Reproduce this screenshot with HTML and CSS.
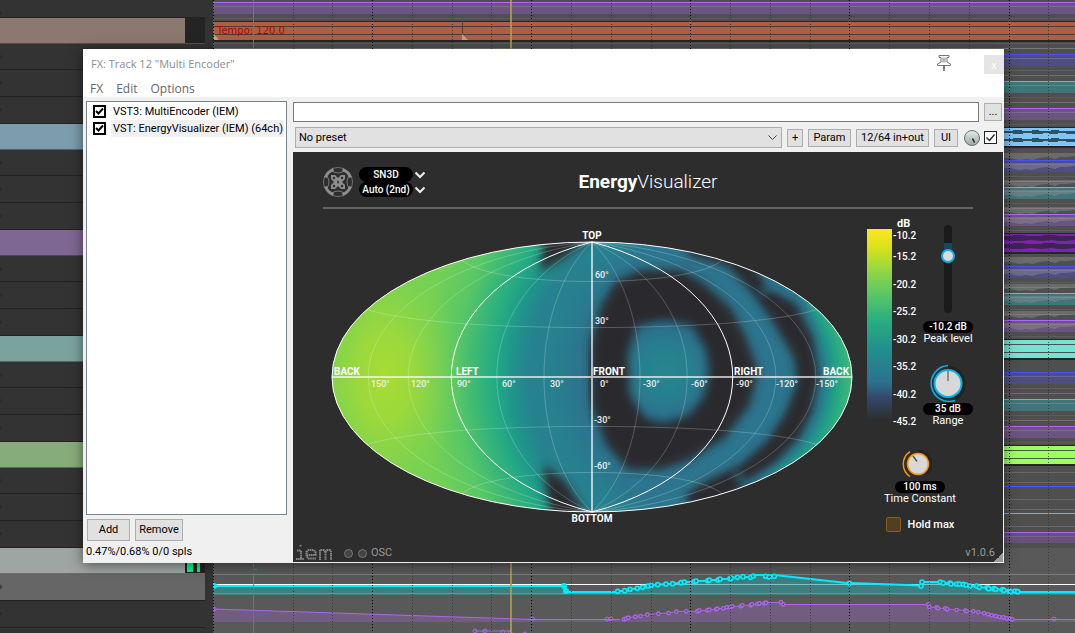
FILE: index.html
```html
<!DOCTYPE html>
<html lang="en">
<head>
<meta charset="utf-8">
<title>FX: Track 12 "Multi Encoder"</title>
<link rel="stylesheet" href="styles.css">
</head>
<body>
<div class="daw">
  <div class="tracks">
    <div class="track first"></div>
    <div class="track folder brown"><span class="meter"></span></div>
    <div class="track short"></div><div class="track"></div><div class="track"></div>
    <div class="track folder blue"></div>
    <div class="track short"></div><div class="track"></div><div class="track"></div>
    <div class="track folder purple"></div>
    <div class="track short"></div><div class="track"></div><div class="track"></div>
    <div class="track folder teal"></div>
    <div class="track short"></div><div class="track"></div><div class="track"></div>
    <div class="track folder green"></div>
    <div class="track short"></div><div class="track"></div><div class="track"></div>
    <div class="track folder silver"><span class="meter"><i></i><i class="thin"></i></span></div>
    <div class="track selected"></div><div class="track"></div><div class="track"></div>
  </div>
  <svg class="arrange" viewBox="213 0 862 633" preserveAspectRatio="xMinYMin slice" aria-hidden="true">
    <defs>
      <g id="lane" shape-rendering="crispEdges">
        <rect x="213" width="862" height="11" y="1" opacity=".28" fill="currentColor"/>
        <rect x="213" width="862" height="1" fill="currentColor"/>
        <rect x="213" width="862" height="1" y="4" fill="#fff" opacity=".14"/>
        <rect x="213" width="862" height="1" y="16" fill="#5d5d5d"/>
        <rect x="213" width="862" height="1" y="21" fill="#707070"/>
      </g>
      <g id="lanes">
        <use href="#lane" y="0" color="#4a50ff"/>
        <use href="#lane" y="27" color="#18dcec"/>
        <use href="#lane" y="54" color="#b066ff"/>
      </g>
      <g id="item" shape-rendering="crispEdges">
        <rect x="213" y="-1" width="862" height="21" fill="#262626"/>
        <rect x="213" width="862" height="18" fill="currentColor"/>
        <rect x="213" y="4" width="862" height="1" fill="#333" opacity=".8"/>
        <rect x="213" y="12" width="862" height="1" fill="#333" opacity=".8"/>
      </g>
      <path id="wave" d="M1004 0h9v-1h9v1h10v-1h7v1h12v-1h8v1h16v3h-9v-1h-8v1h-9v-1h-6v1h-11v-1h-9v1h-10v-1h-9z"/>
      <path id="thickwave" d="M1004 0h8l2-1h9l4 1h14l3-1h10l5 1h16v4l-9 1h-7l-8-1-9 1-12-1-8 1h-9l-9-1z"/>
      <path id="haze" d="M1004 0h71v3l-8 1h-7l-5 2-8-2-8 1-7 2-6-1-7 1-9-2-6 0z" fill="#8e8e8e" opacity=".45"/>
      <marker id="cyan-dot" markerUnits="userSpaceOnUse" markerWidth="20" markerHeight="20" refX="10" refY="10"><circle cx="10" cy="10" r="6" fill="#3c6668" stroke="#00eeff" stroke-width="5"/></marker>
      <marker id="violet-dot" markerUnits="userSpaceOnUse" markerWidth="16" markerHeight="16" refX="8" refY="8"><circle cx="8" cy="8" r="5" fill="#59506a" stroke="#ae66ec" stroke-width="4"/></marker>
    </defs>
    <rect x="213" width="862" height="633" fill="#4f4f4f"/>
    <rect x="213" y="548" width="862" height="85" fill="#595959"/>
    <use href="#lane" y="2" color="#b066ff"/>
    <use href="#item" y="22" color="#ac5f43"/>
    <rect x="213" y="43" width="862" height="1" fill="#5b5b5b"/><rect x="213" y="48" width="862" height="1" fill="#777"/>
    <use href="#lanes" y="54"/><use href="#lanes" y="160"/><use href="#lanes" y="266"/><use href="#lanes" y="372"/>
    <g shape-rendering="crispEdges">
      <g fill="#686868"><rect x="1004" y="472" width="71" height="1"/><rect x="1004" y="482" width="71" height="1"/><rect x="1004" y="499" width="71" height="1"/><rect x="1004" y="509" width="71" height="1"/><rect x="1004" y="526" width="71" height="1"/></g>
      <rect x="1004" y="486" width="71" height="1" fill="#4a5cff"/><rect x="1004" y="513" width="71" height="1" fill="#18dcec"/>
      <rect x="1004" y="532" width="71" height="1" fill="#b066ff"/><rect x="1004" y="533" width="71" height="10" fill="#66527a"/>
      <rect x="1004" y="536" width="71" height="1" fill="#776788"/>
    </g>
    <use href="#item" y="128" color="#7cc8fc"/><use href="#item" y="234" color="#7e22b4"/>
    <use href="#item" y="340" color="#78e2d0"/><use href="#item" y="446" color="#9cff66"/>
    <g fill="#33505f"><use href="#wave" y="131"/><use href="#wave" y="139"/></g>
    <g fill="#3f2353"><use href="#thickwave" y="236"/><use href="#thickwave" y="244"/></g>
    <use href="#haze" y="153"/><use href="#haze" y="180"/><use href="#haze" y="207"/>
    <use href="#haze" y="163"/><use href="#haze" y="190"/><use href="#haze" y="217"/>
    <use href="#haze" y="257"/><use href="#haze" y="284"/><use href="#haze" y="311"/>
    <use href="#haze" y="269"/><use href="#haze" y="296"/><use href="#haze" y="323"/>

    <g shape-rendering="crispEdges">
      <rect x="213" y="574" width="862" height="1" fill="#728280"/>
      <rect x="213" y="584" width="862" height="1" fill="#fff"/>
    </g>
    <path d="M213 586H564L566 592H616L650 586L700 580L765 575L850 583L921 585L922 582H945L1018 592H1075V595H213Z" fill="#2f9a9c" opacity=".6"/>
    <rect x="213" y="593" width="862" height="1" fill="#5c9a9b"/>
    <path d="M213 609L533 619.500H620L690 612L770 602.500H781L784 604H928L930 608L1012 619.500H1075V622H213Z" fill="#8862a8" opacity=".5"/>
    <g fill="none" stroke="#00eeff" stroke-width="2">
      <path d="M213 586H564L566 592H618"/>
      <path d="M1017 592H1075"/>
      <path d="M850 583L921 585.500"/>
    </g>
    <path d="M213 609L533 619.500H620M784 604.500H928M1012 619.500H1075" fill="none" stroke="#ae66ec"/>
    <g fill="none" stroke="#00eeff" stroke-width="2">
      <circle cx="214" cy="586" r="2"/><circle cx="564" cy="586" r="2"/><circle cx="566" cy="591" r="2"/>
    </g>
    <g fill="none" stroke="#ae66ec"><circle cx="214" cy="609" r="2"/><circle cx="532.500" cy="619" r="2"/><circle cx="607" cy="619" r="2"/><circle cx="611" cy="619" r="2"/><circle cx="1054" cy="619" r="2"/><path d="M475 631H512"/><circle cx="475" cy="631" r="2"/><circle cx="485" cy="631" r="2"/><circle cx="503" cy="632" r="2"/><circle cx="510" cy="633" r="2"/><circle cx="525" cy="634" r="2"/></g>
    <g transform="translate(580 550) scale(.33333)" fill="none">
      <polyline stroke="#00eeff" stroke-width="6" marker-start="url(#cyan-dot)" marker-mid="url(#cyan-dot)" marker-end="url(#cyan-dot)" points="113,124 134,122 150,118 172,115 188,112 204,108 214,106 233,104 258,102 278,101 303,98 313,96 343,95 348,93 384,92 388,90 414,90 420,87 450,86 454,84 472,82 489,80 512,82 520,78"/>
      <polyline stroke="#00eeff" stroke-width="6" points="520,77 530,75 590,76 808,100"/>
      <polyline stroke="none" marker-start="url(#cyan-dot)" marker-mid="url(#cyan-dot)" marker-end="url(#cyan-dot)" points="557,79 568,81 583,79 808,100"/>
      <polyline stroke="#ae66ec" stroke-width="3" marker-start="url(#violet-dot)" marker-mid="url(#violet-dot)" marker-end="url(#violet-dot)" points="132,208 138,206 145,203 166,200 181,198 202,194 235,191 266,189 289,185 319,184 352,184 358,181 382,181 388,179 408,178 412,176 430,175 440,172 450,172 457,169 482,169 487,166 512,166 516,163 532,162 538,160 553,160 558,158 603,157 610,163"/>
    </g>
    <g transform="translate(850 400) scale(.33333)" fill="none">
      <polyline stroke="#00eeff" stroke-width="6" marker-start="url(#cyan-dot)" marker-mid="url(#cyan-dot)" marker-end="url(#cyan-dot)" points="213,558 216,546 271,546 280,549 300,549 303,552 320,552 328,552 340,553 348,555 360,558 380,558 388,562 412,563 416,566 432,566 437,568 458,569 462,571 478,573 482,575 496,573 503,575"/>
      <polyline stroke="#ae66ec" stroke-width="3" marker-start="url(#violet-dot)" marker-mid="url(#violet-dot)" marker-end="url(#violet-dot)" points="235,613 238,622 260,622 264,625 286,625 292,628 320,630 346,632 350,634 370,634 385,637 402,640 414,643 425,646 437,648 448,651 460,652 470,655 480,656 487,658"/>
    </g>
    <g stroke="#2b2b2b" stroke-dasharray="1 2" opacity=".75" shape-rendering="crispEdges">
      <path d="M293.500 0V633M332.500 0V633M412.500 0V633M452.500 0V633M491.500 0V633M571.500 0V633M611.500 0V633M651.500 0V633M730.500 0V633M770.500 0V633M810.500 0V633M889.500 0V633M929.500 0V633M969.500 0V633M1048.500 0V633"/>
    </g>
    <path stroke="#000" stroke-dasharray="1 2" shape-rendering="crispEdges" d="M213.500 0V633M372.500 0V633M531.500 0V633M690.500 0V633M849.500 0V633M1009.500 0V633"/>
    <path d="M462.500 21V40" stroke="#5a3a2e"/><path d="M462 34l6 6h-6zM214 34l5 6h-5z" fill="#cf9a8a"/>
    <text class="tempo" x="217" y="34">Tempo: 120.0</text>
    <path d="M253.500 0V567M253.500 573V633M253 569h4" stroke="#3f8f80" shape-rendering="crispEdges"/>
    <rect x="510" width="2" height="633" fill="#b39a50" opacity=".85"/>
  </svg>

  <section class="window">
    <header class="titlebar">
      <h1>FX: Track 12 "Multi Encoder"</h1>
      <button class="pin" aria-label="Pin window"><svg width="16" height="16" viewBox="0 0 16 16" fill="#fff" stroke="#777"><path d="M3 .5h10v2h-2v4.500l3.500 2v1.500H1.500V9L5 7V2.500H3z"/><path d="M7 2.500v5M9 2.500v5M7.500 10.500v4l.5 1.500.5-1.500v-4" fill="none"/></svg></button>
      <button class="close" aria-label="Close">x</button>
    </header>
    <nav class="menu"><button>FX</button><button>Edit</button><button>Options</button></nav>
    <div class="body">
      <div class="chain">
        <ul class="list">
          <li><label><input type="checkbox" checked><span>VST3: MultiEncoder (IEM)</span></label></li>
          <li class="current"><label><input type="checkbox" checked><span>VST: EnergyVisualizer (IEM) (64ch)</span></label></li>
        </ul>
        <div class="buttons"><button class="btn">Add</button><button class="btn">Remove</button></div>
        <p class="status">0.47%/0.68% 0/0 spls</p>
      </div>
      <div class="fx">
        <div class="comment"><input type="text" aria-label="Comment"><button class="btn">...</button></div>
        <div class="preset">
          <span class="drop"><select aria-label="Preset"><option>No preset</option></select></span>
          <button class="btn plus">+</button><button class="btn param">Param</button><button class="btn io">12/64 in+out</button><button class="btn ui">UI</button>
          <svg class="wet" width="18" height="18" viewBox="0 0 18 18"><defs><linearGradient id="wetg" x2="0" y2="1"><stop stop-color="#e8eeec"/><stop offset="1" stop-color="#9aa5a3"/></linearGradient></defs><circle cx="9" cy="9" r="7.500" fill="url(#wetg)" stroke="#6b7372"/><path d="M9.500 9.500l2 4" stroke="#222" stroke-width="1.500"/></svg>
          <input class="bypass" type="checkbox" checked aria-label="Enable FX">
        </div>
        <div class="plugin">
          <header class="phead">
            <svg class="logo" width="30" height="30" viewBox="0 0 30 30" fill="none" stroke="#8d8d8d">
              <path fill="#8d8d8d" stroke="none" d="M10 1Q3.500 3.500 1 10L4 11Q5 6 11 4zM20 1q6.500 2.500 9 9l-3 1Q25 6 19 4zM10 29q-6.500-2.500-9-9l3-1q1 5 7 7zM20 29q6.500-2.500 9-9l-3-1q-1 5-7 7z"/>
              <path d="M9 1.500Q15-.5 21 1.500M28.500 9q2 6 0 12M21 28.500q-6 2-12 0M1.500 21q-2-6 0-12" stroke-width=".7"/>
              <path d="M9 4q6 4 12 0M26 9q-4 6 0 12M21 26q-6-4-12 0M4 21q4-6 0-12" stroke-width=".8"/>
              <path fill="#8d8d8d" stroke="none" d="M8 8h4l3 3 3-3h4v4l-3 3 3 3v4h-4l-3-3-3 3H8v-4l3-3-3-3z"/>
              <g fill="#2d2d2d" stroke="none"><circle cx="11" cy="11" r="1.200"/><circle cx="19" cy="11" r="1.200"/><circle cx="11" cy="19" r="1.200"/><circle cx="19" cy="19" r="1.200"/><path d="M15 13l1 2-1 2-1-2z"/></g>
            </svg>
            <div class="combos">
              <span class="pick"><select aria-label="Normalization"><option>SN3D</option></select><svg width="12" height="8" viewBox="0 0 12 8"><path d="M1.500 1.500L6 6l4.500-4.500" fill="none" stroke="#eee" stroke-width="2"/></svg></span>
              <span class="pick"><select aria-label="Order"><option>Auto (2nd)</option></select><svg width="12" height="8" viewBox="0 0 12 8"><path d="M1.500 1.500L6 6l4.500-4.500" fill="none" stroke="#eee" stroke-width="2"/></svg></span>
            </div>
            <h2><b>Energy</b>Visualizer</h2>
          </header>
          <div class="pmain">
            <svg class="map" viewBox="323 209 544 332" role="img" aria-label="Energy distribution on the sphere">
              <defs>
                <clipPath id="globe"><ellipse cx="592" cy="377" rx="260" ry="135"/></clipPath>
                <radialGradient id="base" gradientUnits="userSpaceOnUse" cx="721" cy="377" r="400">
                  <stop offset=".36" stop-color="#2c758e"/><stop offset=".42" stop-color="#27808e"/><stop offset=".48" stop-color="#26828e"/><stop offset=".525" stop-color="#1f958b"/><stop offset=".56" stop-color="#22a884"/><stop offset=".6" stop-color="#35b479"/><stop offset=".665" stop-color="#58c765"/><stop offset=".75" stop-color="#74d054"/><stop offset="1" stop-color="#7ad151"/>
                </radialGradient>
                <radialGradient id="hot" gradientUnits="userSpaceOnUse" cx="0" cy="0" r="1" gradientTransform="translate(385 377) scale(78 125)">
                  <stop stop-color="#a8db33"/><stop offset=".35" stop-color="#a2da38" stop-opacity=".85"/><stop offset="1" stop-color="#86d549" stop-opacity="0"/>
                </radialGradient>
                <radialGradient id="core" gradientUnits="userSpaceOnUse" cx="665" cy="372" r="52"><stop stop-color="#24888e"/><stop offset=".5" stop-color="#287f8e"/><stop offset="1" stop-color="#2c6c8c"/></radialGradient>
                <radialGradient id="edge" gradientUnits="userSpaceOnUse" cx="720" cy="377" r="134">
                  <stop offset=".7" stop-color="#2c6f8e"/><stop offset=".79" stop-color="#26828e"/><stop offset=".87" stop-color="#20a386"/><stop offset="1" stop-color="#42be71"/>
                </radialGradient>
                <filter id="soft" x="-20%" y="-20%" width="140%" height="140%"><feGaussianBlur stdDeviation="5"/></filter>
                <filter id="softer" x="-30%" y="-30%" width="160%" height="160%"><feGaussianBlur stdDeviation="4"/></filter>
                <filter id="faint" x="-60%" y="-60%" width="220%" height="220%"><feGaussianBlur stdDeviation="5"/></filter>
              </defs>
              <g clip-path="url(#globe)">
                <rect x="323" y="209" width="544" height="332" fill="url(#base)"/>
                <rect x="323" y="209" width="200" height="332" fill="url(#hot)"/>
                <path filter="url(#softer)" fill="url(#edge)" d="M774 270L808 300 818 340 820 377 817 410 800 440 765 475 880 475 880 270z"/>
                <g fill="#2b2a2d">
                  <path filter="url(#soft)" d="M616 281L640 270 682 270 704 283 731 308 745 335 758 370 750 405 725 438 690 460 660 470 628 470 606 445 591 405 590 345 601 305z"/>
                  <path filter="url(#softer)" d="M680 240L690 256 728 266 752 293 773 322 794 358 797 382 786 412 768 440 740 465 708 480 686 494 690 520 730 500 748 480 775 463 800 437 812 412 819 377 813 338 796 304 770 290 760 276 745 250z"/>
                  <path filter="url(#faint)" d="M545 230L592 236 564 258 540 272z"/>
                  <path filter="url(#faint)" d="M543 464L566 482 592 524 552 524 547 494z"/>
                  <path filter="url(#softer)" d="M592 330q-6 47 0 94z"/>
                </g>
                <path filter="url(#soft)" fill="url(#core)" d="M637 326L665 320 692 326 706 350 709 372 704 396 688 416 662 423 645 418 630 395 628 355z"/>
                <path filter="url(#softer)" stroke="#2c6f8e" stroke-width="6" fill="none" d="M760 294l18-14M734 472l14 14" opacity=".8"/>
              </g>
              <g id="graticule" fill="none" stroke="#fff"></g>
              <path d="M332 377H852M592 242V512" stroke="#fff" stroke-width="2" opacity=".65"/>
              <ellipse cx="592" cy="377" rx="260" ry="135" fill="none" stroke="#fff"/>
              <g class="poles"><text x="592" y="239" text-anchor="middle">TOP</text><text x="592" y="522" text-anchor="middle">BOTTOM</text><text x="334" y="375">BACK</text><text x="456" y="375">LEFT</text><text x="593" y="375">FRONT</text><text x="734" y="375">RIGHT</text><text x="849" y="375" text-anchor="end">BACK</text></g>
              <g class="degrees"><text x="371" y="387">150°</text><text x="411" y="387">120°</text><text x="457" y="387">90°</text><text x="502" y="387">60°</text><text x="550" y="387">30°</text><text x="600" y="387">0°</text><text x="643" y="387">-30°</text><text x="691" y="387">-60°</text><text x="736" y="387">-90°</text><text x="776" y="387">-120°</text><text x="816" y="387">-150°</text><text x="595" y="278">60°</text><text x="595" y="324">30°</text><text x="594" y="423">-30°</text><text x="594" y="469">-60°</text></g>
            </svg>
            <aside class="controls">
              <div class="upper">
                <div class="scale"><span class="bar"></span>
                  <div class="ticks"><strong>dB</strong><span>-10.2</span><div class="steps"><span>-15.2</span><span>-20.2</span><span>-25.2</span><span>-30.2</span><span>-35.2</span><span>-40.2</span><span>-45.2</span></div></div>
                </div>
                <div class="column">
                  <input class="fader" id="peak" type="range" min="0" max="100" value="67">
                  <input class="value" type="text" value="-10.2 dB" aria-label="Peak level value">
                  <label for="peak">Peak level</label>
                  <svg class="knob large" viewBox="0 0 40 38"><path d="M20 3a17 17 0 0 1 7 32" stroke="#222" stroke-width="3" fill="none"/><path d="M20 1.500a18 18 0 1 0 7 35" stroke="#08b2ea" stroke-width="1.500" fill="none"/><circle cx="20" cy="19.500" r="13.500" fill="#d8d8d8" stroke="#08b2ea" stroke-width="2"/><path d="M20 7v10" stroke="#777" stroke-width="1.500"/></svg>
                  <input class="value" id="range" type="text" value="35 dB">
                  <label for="range">Range</label>
                </div>
              </div>
              <svg class="knob" viewBox="0 0 32 32"><path d="M16 3a13 13 0 0 1 8 23" stroke="#222" stroke-width="3" fill="none"/><path d="M8 3.500a15 15 0 0 0 0 25" stroke="#fa9800" stroke-width="1.500" fill="none"/><circle cx="16" cy="16" r="10.500" fill="#d8d8d8" stroke="#fa9800" stroke-width="1.500"/><path d="M11 8l4 5.500" stroke="#555" stroke-width="1.500"/></svg>
              <input class="value" id="time" type="text" value="100 ms">
              <label for="time">Time Constant</label>
              <label class="hold"><input type="checkbox">Hold max</label>
            </aside>
          </div>
          <footer class="pfoot">
            <svg width="38" height="16" viewBox="0 0 38 16" fill="none" stroke="#888" stroke-width="2" stroke-dasharray="1.500 .6"><path d="M5.500 0v2M2 5.500h4v8.500M1 14h8M21 13.500h-7.500l-2-2V7l2-2h5l2 2v3h-8M25 15V5h4l1.500 2 1.500-2h3l1 2v8M30.500 7v8"/></svg>
            <i></i><i></i><span>OSC</span><span class="version">v1.0.6</span>
          </footer>
        </div>
      </div>
    </div>
  </section>
</div>
<script src="graticule.js"></script>
</body>
</html>
```
FILE: styles.css
```css
* { box-sizing: border-box; }
body { margin: 0; background: #333; font: 11px/14px Roboto, "Liberation Sans", sans-serif; color: #000; }
button, input, select { font: inherit; color: inherit; margin: 0; }
button { padding: 0; border: 0; background: none; }
h1, h2, p, ul { margin: 0; padding: 0; font-weight: normal; list-style: none; }

.daw { position: relative; display: flex; min-height: 100vh; overflow: hidden; }
.tracks { flex: 0 0 213px; padding-right: 8px; max-height: 100vh; overflow: hidden; }
.track { height: 27px; border-bottom: 1px solid #222; background: radial-gradient(circle at 0 50%, #262626, transparent 3px) 0 8px / 3px 10px no-repeat #333; }
.track.first { height: 18px; }
.track.short { height: 26px; }
.track.folder { height: 26px; display: flex; justify-content: flex-end; border-bottom-color: rgba(0,0,0,.35); }
.brown { background: #8d7870; }
.blue { background: #7d9cad; }
.purple { background: #7e6893; }
.teal { background: #7aa39e; }
.green { background: #87ac7c; }
.silver { background: #9ea5a3; }
.track.selected { background-color: #666; }
.meter { width: 20px; background: #242424; display: flex; gap: 4px; padding: 0 2px 1px; }
.meter i { width: 6px; background: #0bf58d; }
.meter .thin { width: 3px; }
.arrange { flex: 1; width: 0; height: 100vh; }
.tempo { font: 10px "DejaVu Sans", sans-serif; fill: #a80a06; }

.window { position: absolute; left: 83px; right: 71px; top: 49px; background: #f0f0f0; box-shadow: 0 2px 12px rgba(0,0,0,.5); }
.titlebar { display: flex; align-items: center; height: 31px; padding: 0 0 2px 8px; background: #fff; color: #8c8c8c; font-family: "Open Sans", sans-serif; }
.titlebar h1 { flex: 1; font-size: 11px; }
.pin { width: 16px; height: 18px; margin-right: 32px; }
.close { width: 20px; height: 19px; margin-top: 2px; background: #e5e5e5; color: #fff; }
.menu { display: flex; gap: 13px; height: 17px; padding-left: 7px; background: #fff; color: #666; font: 12px/17px "Open Sans", sans-serif; }
.body { display: flex; }
.chain { flex: 0 0 210px; min-width: 0; display: flex; flex-direction: column; padding: 4px 6px 3px 3px; }
.list { flex: 1; border: 1px solid #7c8490; background: #fff; padding: 1px 2px; }
.list label { display: flex; align-items: center; gap: 5px; height: 17px; padding-left: 4px; }
.list span { flex: 1; min-width: 0; line-height: 17px; padding-left: 2px; white-space: nowrap; }
.list .current span { background: #f0f0f0; }
.list input { appearance: none; width: 13px; height: 13px; border: 2px solid #000; background: url("data:image/svg+xml,%3Csvg xmlns='http://www.w3.org/2000/svg' viewBox='0 0 9 9'%3E%3Cpath d='M1 4l2.500 2.500L8 1.500' fill='none' stroke='%23000' stroke-width='2'/%3E%3C/svg%3E"); }
.buttons { display: flex; gap: 5px; padding: 4px 1px 2px; }
.btn { height: 18px; border: 1px solid #adadad; background: #e1e1e1; }
.buttons .btn { width: 43px; height: 22px; }
.buttons .btn + .btn { width: 48px; }
.status { line-height: 17px; }
.fx { flex: 1; min-width: 0; padding: 5px 1px 1px 0; }
.comment { display: flex; align-items: center; gap: 5px; padding-right: 1px; }
.comment input { flex: 1; height: 20px; border: 1px solid #7a7a7a; background: #fff; }
.comment .btn { width: 18px; }
.preset { display: flex; align-items: center; gap: 5px; padding: 5px 6px 4px 2px; }
.drop { flex: 1; display: flex; }
.drop select { appearance: none; flex: 1; height: 21px; padding: 0 3px; border: 1px solid #adadad; border-radius: 0; background: url("data:image/svg+xml,%3Csvg xmlns='http://www.w3.org/2000/svg' viewBox='0 0 9 6'%3E%3Cpath d='M.5 .5l4 4 4-4' fill='none' stroke='%23444'/%3E%3C/svg%3E") right 4px center / 9px 6px no-repeat #e1e1e1; }
.plus { width: 16px; }
.param { width: 43px; }
.io { width: 73px; }
.ui { width: 24px; }
.wet { margin-right: -2px; }
.bypass { appearance: none; width: 13px; height: 13px; border: 1px solid #222; background: url("data:image/svg+xml,%3Csvg xmlns='http://www.w3.org/2000/svg' viewBox='0 0 11 11'%3E%3Cpath d='M1.500 5.500l3 3 5-6' fill='none' stroke='%23222' stroke-width='1.300'/%3E%3C/svg%3E") #fff; }

.plugin { background: #2d2d2d; color: #fff; }
.phead { display: grid; grid-template-columns: 36px 1fr auto 1fr 36px; align-items: center; height: 57px; margin: 0 30px; padding-top: 5px; border-bottom: 2px solid #646464; }
.phead h2 { font-size: 19px; line-height: 24px; font-weight: 300; }
.phead b { font-weight: 700; }
.combos { display: flex; flex-direction: column; }
.pick { display: flex; align-items: center; gap: 1px; }
.pick select { appearance: none; width: 54px; height: 15px; padding: 0; border: 0; border-radius: 8px; background: #000; color: #fff; font: 500 10px/15px Roboto, sans-serif; text-align: center; text-align-last: center; }
.pmain { display: flex; align-items: flex-start; padding: 0 30px; }
.map { flex: 1; min-width: 0; }
.poles { font: 700 10px Roboto, sans-serif; fill: #fff; }
.degrees { font: 500 9px Roboto, sans-serif; fill: #eee; }
.controls { flex: 0 0 106px; display: flex; flex-direction: column; align-items: center; font-size: 11px; padding-top: 8px; }
.upper { display: flex; align-self: stretch; justify-content: space-between; }
.scale { display: flex; gap: 1px; }
.bar { width: 25px; height: 191px; margin-top: 12px; background: linear-gradient(#fde725, #d8e219 10%, #90d743 22%, #5ec962 33%, #28ae80 48%, #21918c 62%, #2c728e 80%, #34496a 88%, #2d2d2d); }
.ticks { display: flex; flex-direction: column; font: 500 10px/12px Roboto, sans-serif; }
.ticks strong { font-size: 11px; padding-left: 4px; line-height: 13px; }
.steps { display: flex; flex-direction: column; justify-content: space-between; height: 177px; margin-top: 9px; }
.column { display: flex; flex-direction: column; align-items: center; width: 50px; padding-top: 8px; white-space: nowrap; }
.column label, .controls > label { line-height: 12px; white-space: nowrap; }
.fader { appearance: none; writing-mode: vertical-lr; direction: rtl; width: 14px; height: 88px; margin-bottom: 8px; background: none; }
.fader::-webkit-slider-runnable-track { width: 8px; height: 88px; border-radius: 4px; background: linear-gradient(#1b1b1b 20%, #15485b 21% 35%, #1b1b1b 36%); }
.fader::-webkit-slider-thumb { appearance: none; width: 14px; height: 14px; margin-left: -3px; border: 2px solid #14aee6; border-radius: 50%; background: #dcdcdc; }
.value { width: 50px; height: 12px; padding: 0; border: 0; border-radius: 6px; background: #000; color: #fff; font: 500 10px/12px Roboto, sans-serif; text-align: center; }
.knob { width: 32px; height: 32px; flex: none; }
.knob.large { width: 40px; height: 38px; margin: 19px 0 0; }
.controls > .knob { margin-top: 20px; margin-right: 4px; }
.controls .knob + .value { margin-top: 1px; }
.hold { display: flex; align-items: center; gap: 7px; margin-top: 12px; font-weight: 500; }
.hold input { appearance: none; width: 15px; height: 15px; border: 1px solid #8a5f1d; border-radius: 2px; background: #503f21; }
.pfoot { display: flex; align-items: center; gap: 5px; height: 21px; padding: 4px 8px 1px 2px; color: #999; background: linear-gradient(135deg, transparent 50%, #999 50%) right bottom / 9px 9px no-repeat; }
.pfoot svg { margin-right: 6px; }
.pfoot i { width: 9px; height: 9px; border: 1px solid #777; border-radius: 50%; background: #444; }
.pfoot span { margin-left: -1px; }
.pfoot .version { margin-left: auto; }
```
FILE: graticule.js
```javascript
// Hammer projection of the sphere's meridians and parallels.
(function () {
  const rad = Math.PI / 180;
  const group = document.getElementById("graticule");
  function project(lon, lat) {
    const z = Math.sqrt(1 + Math.cos(lat * rad) * Math.cos(lon * rad / 2));
    const x = 592 + 260 * Math.cos(lat * rad) * Math.sin(lon * rad / 2) / z;
    const y = 377 - 135 * Math.sin(lat * rad) / z;
    return x.toFixed(1) + " " + y.toFixed(1);
  }
  function draw(points, opacity) {
    const path = document.createElementNS("http://www.w3.org/2000/svg", "path");
    path.setAttribute("d", "M" + points.join("L"));
    path.setAttribute("opacity", opacity);
    group.appendChild(path);
  }
  for (let lon = -150; lon <= 150; lon += 30) {
    if (lon === 0) continue;
    const points = [];
    for (let lat = -90; lat <= 90; lat += 5) points.push(project(lon, lat));
    draw(points, Math.abs(lon) === 90 ? 1 : 0.22);
  }
  for (const lat of [-60, -30, 30, 60]) {
    const points = [];
    for (let lon = -180; lon <= 180; lon += 5) points.push(project(lon, lat));
    draw(points, 0.22);
  }
})();
```
